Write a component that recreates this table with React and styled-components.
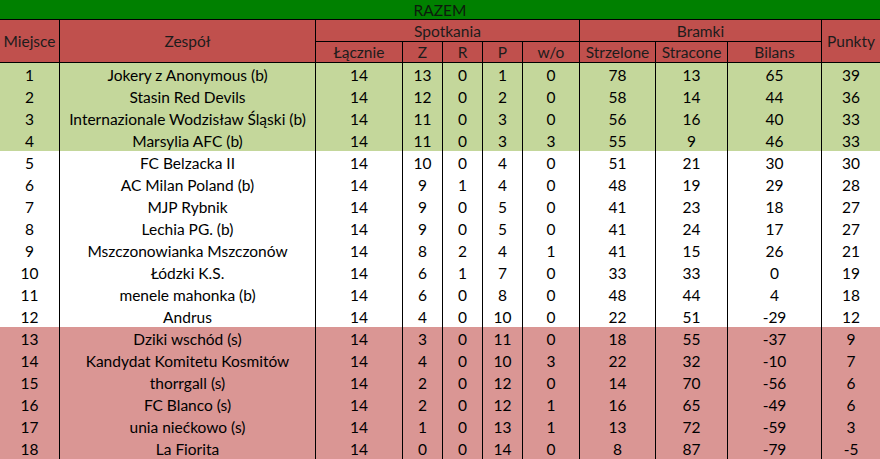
import styled, { createGlobalStyle } from "styled-components";

const GlobalStyle = createGlobalStyle`
    html, body {
        margin: 0;
        padding: 0;
        background: #ffffff;
    }
    body {
        font-family: 'Lato', 'Noto Sans', sans-serif;
    }
`;

const teams = [
    ["Jokery z Anonymous (b)", 14, 13, 0, 1, 0, 78, 13, 65, 39],
    ["Stasin Red Devils", 14, 12, 0, 2, 0, 58, 14, 44, 36],
    ["Internazionale Wodzisław Śląski (b)", 14, 11, 0, 3, 0, 56, 16, 40, 33],
    ["Marsylia AFC (b)", 14, 11, 0, 3, 3, 55, 9, 46, 33],
    ["FC Belzacka II", 14, 10, 0, 4, 0, 51, 21, 30, 30],
    ["AC Milan Poland (b)", 14, 9, 1, 4, 0, 48, 19, 29, 28],
    ["MJP Rybnik", 14, 9, 0, 5, 0, 41, 23, 18, 27],
    ["Lechia PG. (b)", 14, 9, 0, 5, 0, 41, 24, 17, 27],
    ["Mszczonowianka Mszczonów", 14, 8, 2, 4, 1, 41, 15, 26, 21],
    ["Łódzki K.S.", 14, 6, 1, 7, 0, 33, 33, 0, 19],
    ["menele mahonka (b)", 14, 6, 0, 8, 0, 48, 44, 4, 18],
    ["Andrus", 14, 4, 0, 10, 0, 22, 51, -29, 12],
    ["Dziki wschód (s)", 14, 3, 0, 11, 0, 18, 55, -37, 9],
    ["Kandydat Komitetu Kosmitów", 14, 4, 0, 10, 3, 22, 32, -10, 7],
    ["thorrgall (s)", 14, 2, 0, 12, 0, 14, 70, -56, 6],
    ["FC Blanco (s)", 14, 2, 0, 12, 1, 16, 65, -49, 6],
    ["unia niećkowo (s)", 14, 1, 0, 13, 1, 13, 72, -59, 3],
    ["La Fiorita", 14, 0, 0, 14, 0, 8, 87, -79, -5],
];

function zone(place) {
    if (place <= 4) return "promo";
    if (place >= 13) return "relegation";
    return "mid";
}

const zoneColors = {
    promo: "#c4d79b",
    mid: "#ffffff",
    relegation: "#da9694",
};

export default function App() {
    return (
        <>
            <GlobalStyle />
            <Standings>
                <Title>RAZEM</Title>

                <HeadCell $rowSpan={2}>Miejsce</HeadCell>
                <HeadCell $rowSpan={2}>Zespół</HeadCell>
                <HeadCell $colSpan={5}>Spotkania</HeadCell>
                <HeadCell $colSpan={3}>Bramki</HeadCell>
                <HeadCell $rowSpan={2} $last>Punkty</HeadCell>

                <HeadCell>Łącznie</HeadCell>
                <HeadCell>Z</HeadCell>
                <HeadCell>R</HeadCell>
                <HeadCell>P</HeadCell>
                <HeadCell>w/o</HeadCell>
                <HeadCell>Strzelone</HeadCell>
                <HeadCell>Stracone</HeadCell>
                <HeadCell>Bilans</HeadCell>

                {teams.map((team, i) => {
                    const place = i + 1;
                    const cells = [place, ...team];
                    return cells.map((value, j) => (
                        <Cell
                            key={`${place}-${j}`}
                            $bg={zoneColors[zone(place)]}
                            $last={j === cells.length - 1}
                        >
                            {value}
                        </Cell>
                    ));
                })}
            </Standings>
        </>
    );
}

const Standings = styled.div`
    width: 880px;
    display: grid;
    grid-template-columns: 60px 256px 87px 40px 40px 40px 57px 76px 72px 94px 58px;
    grid-template-rows: 20px 22px 21px repeat(18, 22px);
    color: #000000;
    font-size: 15.5px;
`;

const Title = styled.div`
    grid-column: 1 / -1;
    background-color: #008000;
    border-bottom: 1px solid #000000;
    box-sizing: border-box;
    display: flex;
    align-items: center;
    justify-content: center;
    color: #0d1a0d;
    font-size: 15.5px;
    padding-top: 1px;
`;

const HeadCell = styled.div`
    grid-row: span ${(p) => p.$rowSpan || 1};
    grid-column: span ${(p) => p.$colSpan || 1};
    background-color: #c0504d;
    box-sizing: border-box;
    border-bottom: 1px solid #000000;
    border-right: ${(p) => (p.$last ? "none" : "1px solid #000000")};
    display: flex;
    align-items: center;
    justify-content: center;
    color: #1c1c1c;
    white-space: nowrap;
    overflow: hidden;
`;

const Cell = styled.div`
    background-color: ${(p) => p.$bg};
    box-sizing: border-box;
    border-right: ${(p) => (p.$last ? "none" : "1px solid #000000")};
    display: flex;
    align-items: center;
    justify-content: center;
    white-space: nowrap;
    overflow: hidden;
    padding-top: 1px;
`;
